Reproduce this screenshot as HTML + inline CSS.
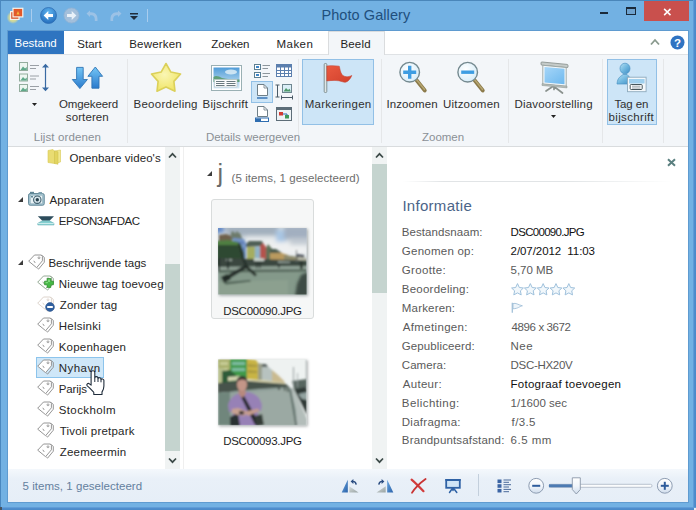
<!DOCTYPE html>
<html lang="nl"><head><meta charset="utf-8"><title>Photo Gallery</title>
<style>
html,body{margin:0;padding:0}
body{width:696px;height:510px;overflow:hidden;position:relative;background:#72b1e3;font-family:"Liberation Sans",sans-serif;}
.a{position:absolute}
.t{position:absolute;white-space:nowrap;line-height:20px;height:20px;font-family:"Liberation Sans",sans-serif;}
svg{position:absolute;overflow:visible}

</style></head><body>
<!-- frame edges -->
<div class="a" style="left:0;top:0;width:696px;height:1px;background:#4a86ba"></div>
<div class="a" style="left:0;top:0;width:1px;height:510px;background:#4a88c0"></div>
<div class="a" style="left:693px;top:0;width:3px;height:510px;background:linear-gradient(90deg,#6aa6dc,#4f8ecf 40%,#4a88c6)"></div>
<div class="a" style="left:0;top:507px;width:696px;height:3px;background:linear-gradient(#6aa6dc,#4f8ecf 40%,#4a88c6)"></div>
<div class="a" style="left:694px;top:508px;width:2px;height:2px;background:#e8eef4"></div>
<div class="a" style="left:0;top:507px;width:2px;height:3px;background:#4a5560"></div>
<div class="a" style="left:7px;top:30px;width:682px;height:473px;background:#5f9bd0"></div>
<!-- window buttons -->
<div class="a" style="left:644px;top:1px;width:45px;height:20px;background:#c9504d"></div>
<svg style="left:662.5px;top:7.5px" width="9" height="8" viewBox="0 0 12 10"><path d="M1.5 0.8 L10 9.2 M10 0.8 L1.5 9.2" stroke="#fff" stroke-width="2" fill="none"/></svg>
<div class="a" style="left:600px;top:12px;width:8px;height:2px;background:#1a2a3a"></div>
<div class="a" style="left:626px;top:7px;width:10px;height:8px;border:1px solid #1a2a3a;border-top-width:2px;box-sizing:border-box;background:#6fa3cf"></div>

<!-- title icons -->
<svg style="left:6px;top:5px" width="20" height="20" viewBox="0 0 20 20">
  <defs><radialGradient id="gw" cx="0.5" cy="0.5" r="0.5"><stop offset="0" stop-color="#f2ea86"/><stop offset="0.6" stop-color="#e6e08a" stop-opacity="0.8"/><stop offset="1" stop-color="#d8dc90" stop-opacity="0"/></radialGradient></defs>
  <circle cx="7" cy="12.500" r="6.500" fill="url(#gw)"/>
  <rect x="4.600" y="6.600" width="8.400" height="7.800" fill="#d8532d" stroke="#f7f3ec" stroke-width="1.200"/>
  <rect x="7" y="3.300" width="9.800" height="8.600" fill="#e2582a" stroke="#f7f3ec" stroke-width="1.200"/>
  <path d="M10.500 9.500 L12 6 L13.500 9.500Z" fill="#f6b53c"/>
</svg>
<div class="a" style="left:31px;top:9px;width:1px;height:13px;background:#a9cdee"></div>
<div class="a" style="left:147px;top:9px;width:1px;height:13px;background:#a9cdee"></div>
<svg style="left:40.300px;top:7.300px" width="17" height="17" viewBox="0 0 17 17">
  <defs><radialGradient id="gb" cx="0.5" cy="0.3" r="0.8"><stop offset="0" stop-color="#5fb4ef"/><stop offset="1" stop-color="#1b62b4"/></radialGradient></defs>
  <circle cx="8.5" cy="8.5" r="8" fill="url(#gb)" stroke="#2f6fb4" stroke-width="0.8"/>
  <path d="M3.6 8.5 L8.3 4 L8.3 6.9 L13 6.9 L13 10.1 L8.3 10.1 L8.3 13Z" fill="#fff"/>
</svg>
<svg style="left:62.800px;top:7.300px" width="17" height="17" viewBox="0 0 17 17">
  <circle cx="8.5" cy="8.5" r="7.600" fill="#a3bfdb" stroke="#8fb2d4" stroke-width="0.8"/>
  <path d="M13.4 8.5 L8.7 4 L8.7 6.9 L4 6.9 L4 10.1 L8.7 10.1 L8.7 13Z" fill="#e9f1f9"/>
</svg>
<svg style="left:86px;top:10px" width="13" height="12" viewBox="0 0 13 12"><path d="M0.5 3.5 L4 0.5 L4 2.3 C9 1.8 12 4.5 11.5 11 L8.8 11 C9.2 7 7.8 5 4 5.2 L4 7Z" fill="#9cc2e6"/></svg>
<svg style="left:109px;top:10px" width="13" height="12" viewBox="0 0 13 12"><path d="M12.5 3.5 L9 0.5 L9 2.3 C4 1.8 1 4.5 1.5 11 L4.2 11 C3.8 7 5.2 5 9 5.2 L9 7Z" fill="#9cc2e6"/></svg>
<svg style="left:130px;top:13px" width="8" height="7" viewBox="0 0 8 7"><rect x="0" y="0" width="8" height="1.5" fill="#1e2d3d"/><path d="M0 3 L8 3 L4 7Z" fill="#1e2d3d"/></svg>

<!-- tab row -->
<div class="a" style="left:8px;top:31px;width:680px;height:23px;background:#fff"></div>
<div class="a" style="left:8px;top:31px;width:56px;height:23px;background:#2e74c0"></div>
<!-- ribbon -->
<div class="a" style="left:8px;top:54px;width:680px;height:93px;background:#f3f6f9;border-top:1px solid #dfe2e5;border-bottom:1px solid #d9dcde;box-sizing:border-box"></div>
<div class="a" style="left:328px;top:31px;width:57px;height:24px;background:#f3f6f9;border:1px solid #dadcde;border-bottom:none;box-sizing:border-box"></div>
<!-- collapse chevron + help -->
<svg style="left:650px;top:38px" width="10" height="8" viewBox="0 0 10 8"><path d="M1 6.5 L5 2 L9 6.5" stroke="#8a9a8e" stroke-width="1.8" fill="none"/></svg>
<svg style="left:670px;top:35px" width="15" height="15" viewBox="0 0 15 15"><circle cx="7.5" cy="7.5" r="7" fill="#2f73c2"/><text x="7.5" y="11.6" font-family="Liberation Sans, sans-serif" font-weight="bold" font-size="11.5" fill="#fff" text-anchor="middle">?</text></svg>

<!-- ribbon separators -->
<div class="a" style="left:127px;top:59px;width:1px;height:84px;background:#e5e7e9"></div>
<div class="a" style="left:298px;top:59px;width:1px;height:84px;background:#e5e7e9"></div>
<div class="a" style="left:381px;top:59px;width:1px;height:84px;background:#e5e7e9"></div>
<div class="a" style="left:508px;top:59px;width:1px;height:84px;background:#e5e7e9"></div>
<div class="a" style="left:602px;top:59px;width:1px;height:84px;background:#e5e7e9"></div>
<div class="a" style="left:663px;top:59px;width:1px;height:84px;background:#e5e7e9"></div>

<!-- ribbon highlighted buttons -->
<div class="a" style="left:302px;top:59px;width:72px;height:66px;background:#cde5f7;border:1px solid #92c0e6;box-sizing:border-box"></div>
<div class="a" style="left:607px;top:59px;width:50px;height:66px;background:#cde5f7;border:1px solid #92c0e6;box-sizing:border-box"></div>
<div class="a" style="left:251px;top:81px;width:22px;height:22px;background:#cde5f7;border:1px solid #92c0e6;box-sizing:border-box"></div>

<!-- RIBBON ICONS -->
<!-- list-order icon -->
<svg style="left:18px;top:62px" width="34" height="32" viewBox="0 0 34 32">
  <g fill="#edf6f1" stroke="#93ad9e" stroke-width="1">
   <rect x="1.5" y="0.5" width="8" height="8"/><rect x="1.5" y="12" width="8" height="7"/><rect x="1.5" y="22.5" width="8" height="7"/>
  </g>
  <g fill="#5fa98a"><path d="M2.5 8 L5 4.5 L7 6.5 L8.8 5 L8.8 8Z"/><path d="M2.5 18.5 L5 15 L7 17 L8.8 15.5 L8.8 18.5Z"/><path d="M2.5 29 L5 25.5 L7 27.5 L8.8 26 L8.8 29Z"/></g>
  <g stroke="#9aa0a6" stroke-width="1"><path d="M12 3.5H21 M12 6.5H18 M12 14H21 M12 17H18 M12 24.5H21 M12 27.5H18"/></g>
  <path d="M27.5 3 V28" stroke="#386aa3" stroke-width="1.2"/>
  <path d="M24 5.5 L27.5 1.700 L31 5.5Z M24 25.500 L27.5 29.300 L31 25.500Z" fill="#386aa3"/>
</svg>
<svg style="left:32px;top:102.5px" width="5" height="3" viewBox="0 0 7 4"><path d="M0 0 L7 0 L3.5 4Z" fill="#222"/></svg>
<!-- reverse sort arrows -->
<svg style="left:71px;top:65px" width="34" height="26" viewBox="0 0 34 26">
  <defs><linearGradient id="ar" x1="0" y1="0" x2="0" y2="1"><stop offset="0" stop-color="#74c6f6"/><stop offset="1" stop-color="#2a7acc"/></linearGradient></defs>
  <path d="M5.6 2.400 H12.200 V14.500 H16.400 L8.900 23.600 L1.300 14.500 H5.6Z" fill="url(#ar)" stroke="#2f75b5" stroke-width="0.9" stroke-linejoin="round"/>
  <path d="M20.900 23.200 H28 V11.300 H31.600 L24.300 2 L16.900 11.300 H20.900Z" fill="url(#ar)" stroke="#2f75b5" stroke-width="0.9" stroke-linejoin="round"/>
</svg>
<!-- star -->
<svg style="left:149px;top:62px" width="34" height="31" viewBox="0 0 34 31">
  <defs><radialGradient id="st" cx="0.45" cy="0.4" r="0.7"><stop offset="0" stop-color="#faf6b4"/><stop offset="1" stop-color="#efe35c"/></radialGradient></defs>
  <path d="M17.00 1.50 L21.88 10.09 L31.55 12.07 L24.89 19.36 L25.99 29.18 L17.00 25.10 L8.01 29.18 L9.11 19.36 L2.45 12.07 L12.12 10.09Z" fill="url(#st)" stroke="#dbd05a" stroke-width="1.6" stroke-linejoin="round"/>
</svg>
<!-- caption icon -->
<svg style="left:211px;top:65px" width="31" height="26" viewBox="0 0 31 26">
  <defs><linearGradient id="sky" x1="0" y1="0" x2="0" y2="1"><stop offset="0" stop-color="#4f9cd8"/><stop offset="1" stop-color="#d6eaf5"/></linearGradient></defs>
  <rect x="0.5" y="0.5" width="30" height="25" fill="#fff" stroke="#9ab0b4"/>
  <rect x="2.5" y="2.5" width="26" height="21" fill="url(#sky)"/>
  <path d="M2.5 12 C5 10 8 11.500 11 13 C16 14.500 22 14 28.5 14.500 V17 H2.5Z" fill="#5fa07a"/><ellipse cx="20" cy="7" rx="6" ry="2.500" fill="#e4f1f8" opacity="0.8"/>
  <rect x="3.500" y="14.500" width="22.500" height="7.500" fill="#fbfcfc" stroke="#b7c3c5" stroke-width="0.6"/>
  <path d="M5 16.500H13.500 M15.500 16.500H24.500 M5 18.500H13.500 M15.500 18.500H24.500 M5 20.500H13.500 M15.500 20.500H24.500" stroke="#596b70" stroke-width="0.9"/>
</svg>
<!-- small icons grid -->
<svg style="left:254px;top:63px" width="40" height="60" viewBox="0 0 40 60">
  <!-- r1c1 -->
  <g fill="#fff" stroke="#5c7f92" stroke-width="1"><rect x="0.5" y="1.5" width="6" height="5"/><rect x="0.5" y="9.5" width="6" height="5"/></g>
  <rect x="2" y="3" width="3" height="2" fill="#3e86c8"/><rect x="2" y="11" width="3" height="2" fill="#3e86c8"/>
  <path d="M8.5 2.5H16 M8.5 5.5H14 M8.5 10.5H16 M8.5 13.5H14" stroke="#8d969c" stroke-width="1"/>
  <!-- r1c2 calendar -->
  <rect x="22.500" y="1.5" width="15" height="12" fill="#fff" stroke="#5b7fae"/>
  <rect x="22" y="1" width="16" height="3.5" fill="#5b7fae"/>
  <path d="M26.500 4V13.500 M30.500 4V13.500 M34.500 4V13.500 M22.500 7.500H37.500 M22.500 10.500H37.500" stroke="#5b7fae" stroke-width="1"/>
  <!-- r2c1 page with lines (selected) -->
  <path d="M3.500 21.500 H10 L13.500 25 V32.500 H3.500Z" fill="#fff" stroke="#6f7f88"/>
  <path d="M10 21.500 V25 H13.500" fill="none" stroke="#6f7f88" stroke-width="0.8"/>
  <path d="M3 35H13.500" stroke="#2e6db0" stroke-width="1.4"/>
  <!-- r2c2 -->
  <path d="M23.500 22 V34 M21.500 22H25.500 M21.500 34H25.500" stroke="#4a5a66" stroke-width="1"/>
  <rect x="28.500" y="21.500" width="9" height="8" fill="#dbeef7" stroke="#6f8791"/>
  <path d="M29.500 28.500 L32 25 L34 27 L35.500 25.800 L36.800 28.500Z" fill="#4f9a6c"/>
  <path d="M27.500 34.500H38.500 M27.500 32.500V36.500 M38.500 32.500V36.500" stroke="#4a5a66" stroke-width="1"/>
  <!-- r3c1 page with bar -->
  <path d="M3.500 43.500 H10 L13.500 47 V53.500 H3.500Z" fill="#fff" stroke="#6f7f88"/>
  <path d="M10 43.500 V47 H13.500" fill="none" stroke="#6f7f88" stroke-width="0.8"/>
  <rect x="1.5" y="55" width="13" height="3.5" fill="#fff" stroke="#2e6db0"/><rect x="2" y="55.500" width="5" height="2.500" fill="#2e6db0"/>
  <!-- r3c2 window -->
  <rect x="22.500" y="44.500" width="15" height="13" fill="#eef3f6" stroke="#5d6d78"/>
  <rect x="22" y="44" width="16" height="3" fill="#5d6d78"/>
  <rect x="25" y="49" width="4" height="3.500" fill="#d23b33"/><rect x="31" y="52" width="4" height="3.500" fill="#3f9a59"/>
  <path d="M29 51H33V52" stroke="#2e6db0" fill="none" stroke-width="1"/>
</svg>
<!-- flag -->
<svg style="left:322px;top:62px" width="32" height="32" viewBox="0 0 32 32">
  <defs><linearGradient id="fl" x1="0" y1="0" x2="1" y2="1"><stop offset="0" stop-color="#ea5a40"/><stop offset="1" stop-color="#d0402c"/></linearGradient></defs>
  <rect x="2.200" y="1.5" width="2.600" height="29" rx="1" fill="#dfe6e6" stroke="#6f7d7d" stroke-width="0.8"/>
  <path d="M4.800 4 C9 3.400 13 3.600 17.300 4.200 C18 7 18.500 10.500 20 12.500 C22 15 26 15.500 29.800 13.400 C28 18 24.500 21.500 20.500 19.800 C16 18 10 18.200 4.800 19Z" fill="url(#fl)" stroke="#c2402f" stroke-width="0.5"/>
</svg>
<!-- zoom in -->
<svg style="left:396px;top:59px" width="34" height="36" viewBox="0 0 34 36">
  <defs><radialGradient id="gl" cx="0.4" cy="0.35" r="0.8"><stop offset="0" stop-color="#ffffff"/><stop offset="1" stop-color="#cfeaf8"/></radialGradient></defs>
  <path d="M20 20.500 L28.800 31.500" stroke="#8b7a4a" stroke-width="3.800" stroke-linecap="round"/>
  <path d="M20.500 20.500 L28.500 30.500" stroke="#b7a772" stroke-width="1.400" stroke-linecap="round"/>
  <circle cx="13.700" cy="13.200" r="9.800" fill="url(#gl)" stroke="#74898f" stroke-width="1.400"/>
  <path d="M13.700 6.700V19.700 M7.200 13.200H20.200" stroke="#3d9de2" stroke-width="3.400"/>
</svg>
<!-- zoom out -->
<svg style="left:454px;top:59px" width="34" height="36" viewBox="0 0 34 36">
  <path d="M20 20.500 L28.800 31.500" stroke="#8b7a4a" stroke-width="3.800" stroke-linecap="round"/>
  <path d="M20.500 20.500 L28.500 30.500" stroke="#b7a772" stroke-width="1.400" stroke-linecap="round"/>
  <circle cx="13.700" cy="13.200" r="9.800" fill="url(#gl)" stroke="#74898f" stroke-width="1.400"/>
  <path d="M7.200 13.200H20.200" stroke="#3d9de2" stroke-width="3.400"/>
</svg>
<!-- slideshow -->
<svg style="left:540px;top:61px" width="29" height="33" viewBox="0 0 29 33">
  <defs><linearGradient id="sc" x1="0" y1="0" x2="1" y2="1"><stop offset="0" stop-color="#a6d6f8"/><stop offset="1" stop-color="#6db8ee"/></linearGradient></defs>
  <path d="M13.500 25 L6 30 M14 25.500 L22.500 32 M14 24 V28.500" stroke="#8a928e" stroke-width="1.700" stroke-linecap="round"/>
  <g transform="skewY(5.5)">
  <rect x="1" y="0.800" width="27" height="3.200" rx="1" fill="#c5cbc9" stroke="#858d89" stroke-width="0.8"/>
  <rect x="2.800" y="4" width="23.400" height="19" fill="#f4f8fa" stroke="#9aa5a2" stroke-width="0.9"/>
  <rect x="4.500" y="5.500" width="20" height="15.500" fill="url(#sc)"/>
  <rect x="2" y="22.500" width="25" height="1.800" fill="#b7bfbc" stroke="#8a928e" stroke-width="0.5"/>
  </g>
</svg>
<svg style="left:551px;top:114.5px" width="5" height="3" viewBox="0 0 7 4"><path d="M0 0 L7 0 L3.5 4Z" fill="#222"/></svg>
<!-- tag & caption icon -->
<svg style="left:616px;top:62px" width="31" height="31" viewBox="0 0 31 31">
  <defs><linearGradient id="pe" x1="0" y1="0" x2="1" y2="1"><stop offset="0" stop-color="#b5e0f3"/><stop offset="0.5" stop-color="#6fb7df"/><stop offset="1" stop-color="#3f8dc4"/></linearGradient></defs>
  <path d="M1 22 C1.500 15 5 14.500 7 12.500 L11 12.500 C12.500 14.500 15.500 15 16 22Z" fill="url(#pe)" stroke="#4a94c4" stroke-width="0.7"/>
  <ellipse cx="9" cy="6.500" rx="5" ry="5.300" fill="url(#pe)" stroke="#4a94c4" stroke-width="0.7"/>
  <rect x="11.500" y="15.200" width="18.600" height="14.500" fill="#f3f8fb" stroke="#8eaabd" stroke-width="0.9"/>
  <rect x="13" y="17" width="15.600" height="4.500" fill="#9fd0ee"/>
  <rect x="14.200" y="22.500" width="12" height="5" rx="1" fill="#fff" stroke="#46565a" stroke-width="1"/>
  <path d="M16 24.200H24.500 M16 26H24.500" stroke="#6d7c84" stroke-width="0.7"/>
</svg>

<!-- content -->
<div class="a" style="left:8px;top:147px;width:680px;height:322px;background:#fff"></div>
<!-- left scrollbar -->
<div class="a" style="left:165px;top:147px;width:15px;height:322px;background:#f0f3f3"></div>
<div class="a" style="left:165px;top:264px;width:15px;height:187px;background:#c5d4cf"></div>
<svg style="left:168px;top:152px" width="9" height="7" viewBox="0 0 9 7"><path d="M1 5.500 L4.500 1.800 L8 5.500" stroke="#3d4a48" stroke-width="1.700" fill="none"/></svg>
<svg style="left:168px;top:457px" width="9" height="7" viewBox="0 0 9 7"><path d="M1 1.500 L4.500 5.200 L8 1.500" stroke="#3d4a48" stroke-width="1.700" fill="none"/></svg>
<div class="a" style="left:183px;top:147px;width:1px;height:322px;background:#efefef"></div>
<!-- center scrollbar -->
<div class="a" style="left:372px;top:147px;width:15px;height:322px;background:#f0f3f3"></div>
<div class="a" style="left:372px;top:164px;width:15px;height:128.5px;background:#c5d4cf"></div>
<svg style="left:375px;top:152px" width="9" height="7" viewBox="0 0 9 7"><path d="M1 5.500 L4.500 1.800 L8 5.500" stroke="#3d4a48" stroke-width="1.700" fill="none"/></svg>
<svg style="left:375px;top:457px" width="9" height="7" viewBox="0 0 9 7"><path d="M1 1.500 L4.500 5.200 L8 1.500" stroke="#3d4a48" stroke-width="1.700" fill="none"/></svg>


<!-- tree selection -->
<div class="a" style="left:36px;top:357px;width:68px;height:21px;background:#cfe7f8;border:1px solid #8cc4ec;box-sizing:border-box"></div>

<!-- thumbnail selection -->
<div class="a" style="left:211px;top:199px;width:103px;height:120px;background:#f6f7f7;border:1px solid #d9dcdc;border-radius:3px;box-sizing:border-box"></div>

<!-- info separator line -->
<div class="a" style="left:403px;top:181px;width:270px;height:1px;background:linear-gradient(90deg,rgba(225,228,230,0),#e1e4e6 15%,#e1e4e6 60%,rgba(225,228,230,0))"></div>
<svg style="left:667px;top:158px" width="9" height="9" viewBox="0 0 9 9"><path d="M1 1.300 L8 7.700 M8 1.300 L1 7.700" stroke="#5a7f7f" stroke-width="2"/></svg>

<!-- status -->
<div class="a" style="left:8px;top:469px;width:680px;height:33px;background:linear-gradient(#f4f8fc,#e9f0f8 30%,#e6eef7)"></div>
<svg style="left:47px;top:149px" width="15" height="16" viewBox="0 0 15 16">
<path d="M1 1.500 L6 0.500 L7.500 2 V14.500 L1 13.500Z" fill="#e9dc72" stroke="#d8c955" stroke-width="0.6"/>
<path d="M7.500 2 L13.500 1 V13 L7.500 14.500Z" fill="#f1e88f" stroke="#d8c955" stroke-width="0.6"/>
<path d="M7.500 2 L11 2.800 V15.300 L7.500 14.500Z" fill="#e2d460" stroke="#cfc04d" stroke-width="0.5"/>
</svg>
<svg style="left:28px;top:191px" width="17" height="15" viewBox="0 0 17 15">
<rect x="0.600" y="2.600" width="15.600" height="11.600" rx="1.500" fill="#a9c9d6" stroke="#5f8595" stroke-width="1"/>
<rect x="2" y="0.800" width="4" height="2" fill="#5f8595"/><rect x="10.500" y="1" width="3.500" height="1.800" fill="#7fa2b0"/>
<rect x="2.200" y="4.200" width="12.400" height="8.600" fill="#e8f2f6" stroke="#88a9b6" stroke-width="0.6"/>
<circle cx="9.300" cy="8.700" r="3.700" fill="#d7e6ec" stroke="#3f5e6c" stroke-width="1.100"/>
<circle cx="9.300" cy="8.700" r="1.700" fill="#27414d"/>
<rect x="3" y="5" width="2" height="1.500" fill="#5f8595"/>
</svg>
<svg style="left:37px;top:215px" width="18" height="11" viewBox="0 0 18 11">
<path d="M0.800 1.200 H17 L12.500 5.800 H5.300Z" fill="#2d4c5c"/>
<path d="M5.300 5.800 H12.500 L17 8.300 V10 H0.800 V8.300Z" fill="#86cfd0" stroke="#5aa6ad" stroke-width="0.5"/>
<path d="M1 8.600 H16.800" stroke="#e4f6f6" stroke-width="0.8"/>
</svg>
<svg style="left:18px;top:197px" width="5" height="5" viewBox="0 0 5 5"><path d="M5 0 V5 H0Z" fill="#3c3c3c"/></svg>
<svg style="left:18px;top:260px" width="5" height="5" viewBox="0 0 5 5"><path d="M5 0 V5 H0Z" fill="#3c3c3c"/></svg>
<svg style="left:27.5px;top:253.5px;opacity:1" width="18" height="17" viewBox="0 0 18 17">
<path d="M13.700 1.200 L16.300 3.400 V8.200 L10.600 15.100 L9.300 14.100" fill="none" stroke="#8a8a8a" stroke-width="0.9"/>
<path d="M0.700 7.200 L6.500 1 H13.100 L14.400 2.400 V6.800 L8.600 13.700Z" fill="#fff" stroke="#8a8a8a" stroke-width="0.9" stroke-linejoin="round"/>
<circle cx="11" cy="3.800" r="0.950" fill="none" stroke="#8a8a8a" stroke-width="0.8"/>
<path d="M5.800 6.800 L7.200 8.900" stroke="#8a8a8a" stroke-width="0.9"/></svg>
<svg style="left:37.3px;top:274.5px;opacity:1" width="18" height="17" viewBox="0 0 18 17">
<path d="M13.700 1.200 L16.300 3.400 V8.200 L10.600 15.100 L9.300 14.100" fill="none" stroke="#8aa08a" stroke-width="0.9"/>
<path d="M0.700 7.200 L6.500 1 H13.100 L14.400 2.400 V6.800 L8.600 13.700Z" fill="#fff" stroke="#8aa08a" stroke-width="0.9" stroke-linejoin="round"/>
<circle cx="11" cy="3.800" r="0.950" fill="none" stroke="#8aa08a" stroke-width="0.8"/>
<path d="M5.800 6.800 L7.200 8.900" stroke="#8aa08a" stroke-width="0.9"/></svg>
<svg style="left:44px;top:278px" width="10" height="10" viewBox="0 0 10 10">
<path d="M3.200 0.600 H6.800 V3.200 H9.400 V6.800 H6.800 V9.400 H3.200 V6.800 H0.600 V3.200 H3.200Z" fill="#45b945" stroke="#2f8f2f" stroke-width="0.8" stroke-linejoin="round"/>
<path d="M3.900 1.500 H6 V3.900 H3.900Z M1.500 3.900 H3.900 V5.200 H1.500Z" fill="#8fe08a" opacity="0.8"/>
</svg>
<svg style="left:37.3px;top:295.5px;opacity:1" width="18" height="17" viewBox="0 0 18 17">
<path d="M13.700 1.200 L16.300 3.400 V8.200 L10.600 15.100 L9.300 14.100" fill="none" stroke="#d9cfc6" stroke-width="0.9"/>
<path d="M0.700 7.200 L6.500 1 H13.100 L14.400 2.400 V6.800 L8.600 13.700Z" fill="#fff" stroke="#d9cfc6" stroke-width="0.9" stroke-linejoin="round"/>
<circle cx="11" cy="3.800" r="0.950" fill="none" stroke="#d9cfc6" stroke-width="0.8"/>
<path d="M5.800 6.800 L7.200 8.900" stroke="#d9cfc6" stroke-width="0.9"/></svg>
<svg style="left:44.500px;top:302px" width="10" height="10" viewBox="0 0 10 10">
<circle cx="5" cy="5" r="4.400" fill="#2f5f9f" stroke="#274f86" stroke-width="0.6"/><rect x="2.200" y="4" width="5.600" height="2" fill="#fff"/></svg>
<svg style="left:37.3px;top:316.5px;opacity:1" width="18" height="17" viewBox="0 0 18 17">
<path d="M13.700 1.200 L16.300 3.400 V8.200 L10.600 15.100 L9.300 14.100" fill="none" stroke="#8a8a8a" stroke-width="0.9"/>
<path d="M0.700 7.200 L6.500 1 H13.100 L14.400 2.400 V6.800 L8.600 13.700Z" fill="#fff" stroke="#8a8a8a" stroke-width="0.9" stroke-linejoin="round"/>
<circle cx="11" cy="3.800" r="0.950" fill="none" stroke="#8a8a8a" stroke-width="0.8"/>
<path d="M5.800 6.800 L7.200 8.900" stroke="#8a8a8a" stroke-width="0.9"/></svg>
<svg style="left:37.3px;top:337.5px;opacity:1" width="18" height="17" viewBox="0 0 18 17">
<path d="M13.700 1.200 L16.300 3.400 V8.200 L10.600 15.100 L9.300 14.100" fill="none" stroke="#8a8a8a" stroke-width="0.9"/>
<path d="M0.700 7.200 L6.500 1 H13.100 L14.400 2.400 V6.800 L8.600 13.700Z" fill="#fff" stroke="#8a8a8a" stroke-width="0.9" stroke-linejoin="round"/>
<circle cx="11" cy="3.800" r="0.950" fill="none" stroke="#8a8a8a" stroke-width="0.8"/>
<path d="M5.800 6.800 L7.200 8.900" stroke="#8a8a8a" stroke-width="0.9"/></svg>
<svg style="left:37.3px;top:358.5px;opacity:1" width="18" height="17" viewBox="0 0 18 17">
<path d="M13.700 1.200 L16.300 3.400 V8.200 L10.600 15.100 L9.300 14.100" fill="none" stroke="#8a8a8a" stroke-width="0.9"/>
<path d="M0.700 7.200 L6.500 1 H13.100 L14.400 2.400 V6.800 L8.600 13.700Z" fill="#fff" stroke="#8a8a8a" stroke-width="0.9" stroke-linejoin="round"/>
<circle cx="11" cy="3.800" r="0.950" fill="none" stroke="#8a8a8a" stroke-width="0.8"/>
<path d="M5.800 6.800 L7.200 8.900" stroke="#8a8a8a" stroke-width="0.9"/></svg>
<svg style="left:37.3px;top:379.5px;opacity:1" width="18" height="17" viewBox="0 0 18 17">
<path d="M13.700 1.200 L16.300 3.400 V8.200 L10.600 15.100 L9.300 14.100" fill="none" stroke="#8a8a8a" stroke-width="0.9"/>
<path d="M0.700 7.200 L6.500 1 H13.100 L14.400 2.400 V6.800 L8.600 13.700Z" fill="#fff" stroke="#8a8a8a" stroke-width="0.9" stroke-linejoin="round"/>
<circle cx="11" cy="3.800" r="0.950" fill="none" stroke="#8a8a8a" stroke-width="0.8"/>
<path d="M5.800 6.800 L7.200 8.900" stroke="#8a8a8a" stroke-width="0.9"/></svg>
<svg style="left:37.3px;top:400.5px;opacity:1" width="18" height="17" viewBox="0 0 18 17">
<path d="M13.700 1.200 L16.300 3.400 V8.200 L10.600 15.100 L9.300 14.100" fill="none" stroke="#8a8a8a" stroke-width="0.9"/>
<path d="M0.700 7.200 L6.500 1 H13.100 L14.400 2.400 V6.800 L8.600 13.700Z" fill="#fff" stroke="#8a8a8a" stroke-width="0.9" stroke-linejoin="round"/>
<circle cx="11" cy="3.800" r="0.950" fill="none" stroke="#8a8a8a" stroke-width="0.8"/>
<path d="M5.800 6.800 L7.200 8.900" stroke="#8a8a8a" stroke-width="0.9"/></svg>
<svg style="left:37.3px;top:421.5px;opacity:1" width="18" height="17" viewBox="0 0 18 17">
<path d="M13.700 1.200 L16.300 3.400 V8.200 L10.600 15.100 L9.300 14.100" fill="none" stroke="#8a8a8a" stroke-width="0.9"/>
<path d="M0.700 7.200 L6.500 1 H13.100 L14.400 2.400 V6.800 L8.600 13.700Z" fill="#fff" stroke="#8a8a8a" stroke-width="0.9" stroke-linejoin="round"/>
<circle cx="11" cy="3.800" r="0.950" fill="none" stroke="#8a8a8a" stroke-width="0.8"/>
<path d="M5.800 6.800 L7.200 8.900" stroke="#8a8a8a" stroke-width="0.9"/></svg>
<svg style="left:37.3px;top:442.5px;opacity:1" width="18" height="17" viewBox="0 0 18 17">
<path d="M13.700 1.200 L16.300 3.400 V8.200 L10.600 15.100 L9.300 14.100" fill="none" stroke="#8a8a8a" stroke-width="0.9"/>
<path d="M0.700 7.200 L6.500 1 H13.100 L14.400 2.400 V6.800 L8.600 13.700Z" fill="#fff" stroke="#8a8a8a" stroke-width="0.9" stroke-linejoin="round"/>
<circle cx="11" cy="3.800" r="0.950" fill="none" stroke="#8a8a8a" stroke-width="0.8"/>
<path d="M5.800 6.800 L7.200 8.900" stroke="#8a8a8a" stroke-width="0.9"/></svg>
<svg style="left:86px;top:370px" width="20" height="26" viewBox="0 0 20 26">
<path d="M5.100 15.200 V2.600 C5.100 0.200 8.800 0.200 8.800 2.600 V7.800 C9 6.200 11.800 6.300 12 8 V8.600 C12.300 7.200 14.900 7.400 15 9 V9.600 C15.400 8.500 17.800 8.700 17.900 10.400 V16 C17.900 19 16.800 20.500 16 22 V24.500 H7.800 V22.500 C6 20.500 3.500 17.500 1 15.600 C0.200 14 2.200 12.800 3.400 13.800Z" fill="#fff" stroke="#1e2b3a" stroke-width="1.100" stroke-linejoin="round"/>
<path d="M8.800 7.800 V12 M12 8.600 V12 M15 9.600 V12.300" stroke="#1e2b3a" stroke-width="1"/>
</svg>
<svg style="left:207px;top:170.5px" width="5" height="5" viewBox="0 0 5 5"><path d="M5 0 V5 H0Z" fill="#3c3c3c"/></svg>
<svg style="left:510.500px;top:283px" width="66" height="13" viewBox="0 0 66 13"><path transform="translate(0.00,0)" d="M6.500 0.600 L8.300 4.500 L12.400 5 L9.400 7.800 L10.200 11.900 L6.500 9.900 L2.800 11.900 L3.600 7.800 L0.600 5 L4.700 4.500Z" fill="#f1f7fb" stroke="#9fc1dc" stroke-width="1" stroke-linejoin="round"/><path transform="translate(12.83,0)" d="M6.500 0.600 L8.300 4.500 L12.400 5 L9.400 7.800 L10.200 11.900 L6.500 9.900 L2.800 11.900 L3.600 7.800 L0.600 5 L4.700 4.500Z" fill="#f1f7fb" stroke="#9fc1dc" stroke-width="1" stroke-linejoin="round"/><path transform="translate(25.66,0)" d="M6.500 0.600 L8.300 4.500 L12.400 5 L9.400 7.800 L10.200 11.900 L6.500 9.900 L2.800 11.900 L3.600 7.800 L0.600 5 L4.700 4.500Z" fill="#f1f7fb" stroke="#9fc1dc" stroke-width="1" stroke-linejoin="round"/><path transform="translate(38.49,0)" d="M6.500 0.600 L8.300 4.500 L12.400 5 L9.400 7.800 L10.200 11.900 L6.500 9.900 L2.800 11.900 L3.600 7.800 L0.600 5 L4.700 4.500Z" fill="#f1f7fb" stroke="#9fc1dc" stroke-width="1" stroke-linejoin="round"/><path transform="translate(51.32,0)" d="M6.500 0.600 L8.300 4.500 L12.400 5 L9.400 7.800 L10.200 11.900 L6.500 9.900 L2.800 11.900 L3.600 7.800 L0.600 5 L4.700 4.500Z" fill="#f1f7fb" stroke="#9fc1dc" stroke-width="1" stroke-linejoin="round"/></svg>
<svg style="left:511px;top:302px" width="13" height="12" viewBox="0 0 13 12">
<path d="M1.300 0.800 V10.800" stroke="#a3c1d9" stroke-width="1.300"/>
<path d="M2 1.600 C5 0.600 6.500 2.600 11.400 3.800 C8 4.600 7.500 6.500 2 6.800Z" fill="#eef5fa" stroke="#a3c1d9" stroke-width="0.9"/></svg>
<svg style="left:218px;top:228px;filter:drop-shadow(1px 1px 1.500px rgba(60,70,70,.45))" width="89" height="67" viewBox="0 0 89 67">
<defs><filter id="b1" x="-5%" y="-5%" width="110%" height="110%"><feGaussianBlur stdDeviation="0.850"/></filter>
<filter id="b2" x="-10%" y="-10%" width="120%" height="120%"><feGaussianBlur stdDeviation="2"/></filter>
<filter id="b3" x="-20%" y="-20%" width="140%" height="140%"><feGaussianBlur stdDeviation="1.500"/></filter>
<clipPath id="c1"><rect x="0" y="0" width="88.600" height="66.500"/></clipPath></defs>
<g clip-path="url(#c1)">
<rect width="89" height="67" fill="#d3dbe0"/>
<g filter="url(#b2)">
<rect x="-3" y="-3" width="9" height="8" fill="#5f86c4"/>
<rect x="8" y="-3" width="52" height="11" fill="#a3b0be"/>
<rect x="58" y="2" width="10" height="14" fill="#a9c6e4"/>
<rect x="66" y="-2" width="26" height="13" fill="#a2afc0"/>
<rect x="28" y="8" width="30" height="8" fill="#e6eaec"/>
<rect x="44" y="14" width="46" height="14" fill="#eef0f1"/>
<rect x="72" y="10" width="20" height="7" fill="#c3cbd3"/>
</g>
<g filter="url(#b1)">
<path d="M1 7 L8 6 L14 8 L14 14 L1 14Z" fill="#6e604c"/>
<path d="M13 5 L14 3.500 L16 3.500 L16 5 L18 5 L18 3.500 L20 3.500 L20 5 L22 5 L24 10 L26 12 L13 12Z" fill="#6d7a6c"/>
<path d="M15 10 L26 11 L28 15 L28 30 L15 30Z" fill="#7494c8"/>
<path d="M16 13 L26 14 L26 16 L16 15Z M16 19 L27 20 L27 22 L16 21Z" fill="#5d7bb0"/>
<path d="M28 16 L31 13 L44 13 L46 18 L28 19Z" fill="#4f5e55"/>
<path d="M29 19 L37 19 L37 32 L29 32Z" fill="#a5ad60"/>
<path d="M37 19 L42 19 L42 32 L37 32Z" fill="#8fb3c6"/>
<path d="M42 18 L45 15 L48 19 L48 31 L42 31Z" fill="#b4534e"/>
<path d="M48 20 L50 16 L55 22 L58 26 L58 33 L48 33Z" fill="#5e7158"/>
<path d="M52 24 L60 24 L70 27 L70 33 L52 33Z" fill="#b99a5e"/>
<path d="M52 21 L58 21 L64 25 L52 25Z" fill="#4c5c4e"/>
<path d="M66 27 L80 29 L80 34 L66 34Z" fill="#8d8a6c"/>
<path d="M78 26 L86 27 L86 30 L78 29Z" fill="#4a4f58"/>
<path d="M80 29 L89 30 L89 35 L80 35Z" fill="#b9baa8"/>
<path d="M-1 13 L10 12 L20 14 L24 18 L24 20 L-1 20Z" fill="#4f7f42"/>
<path d="M-1 17 L22 17 L26 24 L27 36 L-1 38Z" fill="#2f4a30"/>
<path d="M0 30 L89 32.500 L89 39 L0 40Z" fill="#3a4640"/>
<path d="M36 30 L46 30.500 L46 33 L36 33Z" fill="#c9d3cc"/>
<path d="M8 31 L14 31 L14 33 L8 33Z M60 33 L72 33.500 L72 35 L60 35Z" fill="#8d9a92"/>
<path d="M0 39 L89 38 L89 68 L0 68Z" fill="#84998a"/>
<path d="M0 39 L89 38 L89 41 L0 42.500Z" fill="#8fa095"/>
<path d="M0 42 L89 41.500 L89 43.500 L0 44.500Z" fill="#4f6055"/>
<path d="M0 54 L70 52 L70 68 L0 68Z" fill="#8ca08f"/>
<path d="M20 15 L22 15 L26 30 L30 38 L39 46.500 L37 48.500 L27.500 40 L24 31Z" fill="#28322c"/>
<path d="M27 37 L30 39.500 L10 51.500 L7 48.500Z" fill="#252f29"/>
<path d="M3 49 L9 46 L13 51 L6 55Z" fill="#222b26"/>
<path d="M5 54.500 L32 52 L33 53.500 L8 56.500Z" fill="#4a5c50"/>
<rect x="0" y="30" width="2" height="12" fill="#27302b"/>
<rect x="9" y="31" width="2" height="10" fill="#27302b"/>
<rect x="38" y="34" width="1.500" height="6" fill="#2c3630"/><rect x="41" y="34" width="1.500" height="6" fill="#2c3630"/>
<rect x="60" y="35" width="1.500" height="5" fill="#2c3630"/><rect x="82" y="33" width="2.500" height="8" fill="#27302b"/>
<rect x="78" y="22" width="0.800" height="12" fill="#6a6f72"/>
</g>
<path d="M90 44 L83 47 L79 56 L77 68 L90 68Z" fill="#3c4b44" filter="url(#b3)"/>
</g></svg>
<svg style="left:218px;top:359px;filter:drop-shadow(1px 1px 1.500px rgba(60,70,70,.45))" width="89" height="67" viewBox="0 0 89 67">
<defs><clipPath id="c2"><rect x="0" y="0.300" width="88.600" height="66"/></clipPath></defs>
<g clip-path="url(#c2)">
<rect width="89" height="67" fill="#eef2f1"/>
<g filter="url(#b1)">
<path d="M0 0 L12 0 L12 14 L0 16Z" fill="#a8af6c"/>
<path d="M2 3 L10 3 L10 6 L2 6Z M2 9 L10 9 L10 12 L2 12Z" fill="#cfd4a2" opacity="0.8"/>
<path d="M12 0 L29 0 L29 19 L12 17Z" fill="#3f9a49"/>
<path d="M14 3 L27 3 L27 6 L14 6Z M14 9 L27 9 L27 12 L14 12Z" fill="#8ec4b8" opacity="0.8"/>
<path d="M29 0 L38 1 L40 4 L40 21 L29 20Z" fill="#c8b445"/>
<path d="M30 5 L39 6 L39 8 L30 8Z M30 11 L39 12 L39 14 L30 14Z" fill="#a3943f" opacity="0.8"/>
<path d="M40 4 L44 5 L46 7 L46 22 L40 21Z" fill="#9a9f8a"/>
<path d="M44 5 L46 4.500 L48 6 L54 11 L54 23 L44 22Z" fill="#b7c2bf"/>
<path d="M44 5 L48 5 L50 8 L44 8Z" fill="#555f5c"/>
<path d="M54 11 L60 16 L66 22 L67 24 L54 23Z" fill="#c9ba8f"/>
<path d="M0 9 L6 9 L7 26 L0 27Z" fill="#b7bf8c"/>
<path d="M4 12 L12 11 L18 16 L19 24 L4 25Z" fill="#2f5b39"/>
<path d="M10 18 L22 17 L24 21 L10 22Z" fill="#d5d6b0"/>
<path d="M30 21 L46 21 L67 24 L67 26 L30 25Z" fill="#d7d3ac"/>
<path d="M0 24 L30 22 L68 25 L72 29 L0 34Z" fill="#46534b"/>
<path d="M0 34 L40 30 L72 28 L76 32 L89 67 L0 67Z" fill="#93a39d"/>
<path d="M30 34 L70 30 L78 66 L40 67Z" fill="#9ba9a3"/>
<path d="M0 34 L12 33 L12 66 L0 66Z" fill="#70867b"/>
<path d="M60 26 L62 26 L62 31 L60 31Z M66 27 L67.500 27 L67.500 32 L66 32Z M69 27 L70.500 27 L70.500 33 L69 33Z" fill="#49544e"/>
<path d="M72 29 L76 29 L89 60 L89 67 L79 67 L78 50Z" fill="#b3bdba"/>
<path d="M71.500 30 L73 30 L79 67 L77.500 67Z" fill="#4a5a55"/>
<path d="M74 22 L89 20 L89 29 L76 30Z" fill="#56655f"/>
<path d="M76 30 L89 28 L89 56 L84 46Z" fill="#2d3836"/>
<path d="M80 35 L89 33 L89 41 L84 40Z" fill="#93a3a0"/>
<rect x="75" y="8" width="0.900" height="20" fill="#8c9696"/><rect x="79" y="14" width="0.800" height="14" fill="#9aa4a4"/><rect x="88" y="1" width="0.800" height="30" fill="#7f8a8a"/>
<!-- person -->
<path d="M10 46 C12 38 18 35 23 33.500 L30 33 C36 34 42 37 44 46 L43 52 L40 52 L40 67 L14 67 L15 52 L11 53Z" fill="#9781b6"/>
<path d="M21 34 L24 33 L41 64 L37 66Z" fill="#25272b"/>
<path d="M12 58 L20 54 L22 67 L12 67Z" fill="#2c3230"/>
<path d="M37 57 L44 55 L46 66 L38 67Z" fill="#363e39"/>
<path d="M14 50 L20 49 L28 52 L27 57 L20 56 L14 54Z" fill="#c9a291"/>
<path d="M26 53 L40 49.500 L41.500 52 L30 57Z" fill="#c59c8c"/>
<path d="M21 52 L26 52 L26 55.500 L21 55.500Z" fill="#3a3436"/>
<ellipse cx="24" cy="25.500" rx="5" ry="7.200" fill="#c39688"/>
<path d="M18.500 24 C17.500 15 30 14.500 29.500 23 C27 19.500 21 19.500 18.500 24Z" fill="#38302e"/>
<path d="M20.500 31.500 L27.500 31.500 L28 35 L24 39 L20.500 35Z" fill="#b8897e"/>
</g></g></svg>
<svg style="left:341px;top:478px" width="19" height="16" viewBox="0 0 19 16">
<defs><linearGradient id="bt" x1="0" y1="0" x2="1" y2="1"><stop offset="0" stop-color="#6aa6df"/><stop offset="1" stop-color="#2a62aa"/></linearGradient>
<linearGradient id="gt" x1="0" y1="0" x2="1" y2="1"><stop offset="0" stop-color="#d6dcdc"/><stop offset="1" stop-color="#98a3a3"/></linearGradient></defs>
<path d="M0.700 14.400 H6.800 V1.800Z" fill="url(#bt)"/>
<path d="M8.300 8.300 V14.400 H17.500Z" fill="url(#gt)"/>
<path d="M15.200 6.600 C15 4.600 13.800 3.400 11.800 3.400" fill="none" stroke="#2b4c80" stroke-width="1.400"/>
<path d="M12.400 0.900 L9.600 3.400 L12.400 5.900Z" fill="#2b4c80"/>
</svg>
<svg style="left:374.500px;top:478px" width="19" height="16" viewBox="0 0 19 16">
<path d="M18.300 14.400 H12.200 V1.800Z" fill="url(#bt)"/>
<path d="M10.700 8.300 V14.400 H1.500Z" fill="url(#gt)"/>
<path d="M3.800 6.600 C4 4.600 5.200 3.400 7.200 3.400" fill="none" stroke="#2b4c80" stroke-width="1.400"/>
<path d="M6.600 0.900 L9.400 3.400 L6.600 5.900Z" fill="#2b4c80"/>
</svg>
<svg style="left:410px;top:478px" width="17" height="16" viewBox="0 0 17 16">
<path d="M1.600 1.600 C5 4.500 9 8.500 13.500 13.200" stroke="#d23c3c" stroke-width="2.200" stroke-linecap="round" fill="none"/>
<path d="M15.600 1 C10 5 5 10 2 14.800" stroke="#c93434" stroke-width="1.800" stroke-linecap="round" fill="none"/>
</svg>
<svg style="left:445px;top:478px" width="17" height="16" viewBox="0 0 17 16">
<path d="M8 9.500 L4.500 14.500 M8 9.500 L11.800 14.500 M8 9.500 V12.500" stroke="#2f62a5" stroke-width="1.500" stroke-linecap="round"/>
<rect x="1.200" y="2" width="13.600" height="7.800" fill="#cfe4f6" stroke="#2f62a5" stroke-width="1.800"/>
<rect x="0.300" y="1" width="15.400" height="1.800" fill="#2f62a5"/>
</svg>
<div class="a" style="left:478px;top:474px;width:1px;height:22px;background:#c3cfdc"></div>
<svg style="left:496.500px;top:479px" width="15" height="14" viewBox="0 0 15 14">
<g fill="#3b64a4"><rect x="0.500" y="0.500" width="4" height="3.600"/><rect x="0.500" y="5.200" width="4" height="3.600"/><rect x="0.500" y="9.900" width="4" height="3.600"/></g>
<path d="M6.500 1H14 M6.500 3.300H12 M6.500 5.700H14 M6.500 8H12 M6.500 10.400H14 M6.500 12.700H12" stroke="#4a6a9a" stroke-width="1"/>
</svg>
<svg style="left:528px;top:477px" width="146" height="19" viewBox="0 0 146 19">
<defs><linearGradient id="cb" x1="0" y1="0" x2="0" y2="1"><stop offset="0" stop-color="#ffffff"/><stop offset="0.500" stop-color="#f2f6fb"/><stop offset="1" stop-color="#cfdcec"/></linearGradient></defs>
<circle cx="8.200" cy="8.800" r="7.400" fill="url(#cb)" stroke="#8e9db2" stroke-width="1"/>
<rect x="4.200" y="7.800" width="8" height="2" fill="#2f5c9c"/>
<rect x="21" y="7.300" width="103" height="3" rx="1.500" fill="#fbfcfd" stroke="#a9b5c4" stroke-width="0.8"/>
<rect x="21" y="7.300" width="24" height="3" fill="#4c7ab2"/>
<path d="M44.300 0.800 H52.300 V12.500 L48.300 17 L44.300 12.500Z" fill="url(#cb)" stroke="#8a97a8" stroke-width="0.9"/>
<circle cx="136.800" cy="8.800" r="7.400" fill="url(#cb)" stroke="#8e9db2" stroke-width="1"/>
<rect x="132.800" y="7.800" width="8" height="2" fill="#2f5c9c"/><rect x="135.800" y="4.800" width="2" height="8" fill="#2f5c9c"/>
</svg>
<div class="t" id="t0" style="left:321.40px;top:5.40px;font-size:14.5px;color:#1f4f7d;letter-spacing:0.083px;">Photo Gallery</div>
<div class="t" id="t1" style="left:14.50px;top:33.20px;font-size:11.5px;color:#ffffff;letter-spacing:0.000px;">Bestand</div>
<div class="t" id="t2" style="left:77.30px;top:34.20px;font-size:11.5px;color:#1e1e1e;letter-spacing:0.000px;">Start</div>
<div class="t" id="t3" style="left:129.20px;top:34.20px;font-size:11.5px;color:#1e1e1e;letter-spacing:0.205px;">Bewerken</div>
<div class="t" id="t4" style="left:211.20px;top:34.20px;font-size:11.5px;color:#1e1e1e;letter-spacing:-0.020px;">Zoeken</div>
<div class="t" id="t5" style="left:276.60px;top:34.20px;font-size:11.5px;color:#1e1e1e;letter-spacing:0.430px;">Maken</div>
<div class="t" id="t6" style="left:340.40px;top:34.20px;font-size:11.5px;color:#1e1e1e;letter-spacing:0.180px;">Beeld</div>
<div class="t" id="t7" style="left:58.90px;top:94.00px;font-size:11.5px;color:#303030;letter-spacing:-0.115px;">Omgekeerd</div>
<div class="t" id="t8" style="left:65.80px;top:107.00px;font-size:11.5px;color:#303030;letter-spacing:0.103px;">sorteren</div>
<div class="t" id="t9" style="left:133.50px;top:94.00px;font-size:11.5px;color:#303030;letter-spacing:0.264px;">Beoordeling</div>
<div class="t" id="t10" style="left:202.50px;top:94.00px;font-size:11.5px;color:#303030;letter-spacing:0.222px;">Bijschrift</div>
<div class="t" id="t11" style="left:304.70px;top:94.00px;font-size:11.5px;color:#303030;letter-spacing:0.264px;">Markeringen</div>
<div class="t" id="t12" style="left:386.40px;top:94.00px;font-size:11.5px;color:#303030;letter-spacing:0.091px;">Inzoomen</div>
<div class="t" id="t13" style="left:442.90px;top:94.00px;font-size:11.5px;color:#303030;letter-spacing:0.228px;">Uitzoomen</div>
<div class="t" id="t14" style="left:514.50px;top:94.00px;font-size:11.5px;color:#303030;letter-spacing:0.189px;">Diavoorstelling</div>
<div class="t" id="t15" style="left:614.40px;top:94.00px;font-size:11.5px;color:#303030;letter-spacing:-0.092px;">Tag en</div>
<div class="t" id="t16" style="left:608.50px;top:107.00px;font-size:11.5px;color:#303030;letter-spacing:0.345px;">bijschrift</div>
<div class="t" id="t17" style="left:33.70px;top:127.00px;font-size:11.5px;color:#8a9096;letter-spacing:0.106px;">Lijst ordenen</div>
<div class="t" id="t18" style="left:205.90px;top:127.00px;font-size:11.5px;color:#8a9096;letter-spacing:-0.029px;">Details weergeven</div>
<div class="t" id="t19" style="left:422.00px;top:127.00px;font-size:11.5px;color:#8a9096;letter-spacing:-0.020px;">Zoomen</div>
<div class="t" id="t20" style="left:69.50px;top:147.80px;font-size:11.5px;color:#262626;letter-spacing:0.092px;">Openbare video's</div>
<div class="t" id="t21" style="left:49.40px;top:189.80px;font-size:11.5px;color:#262626;letter-spacing:0.193px;">Apparaten</div>
<div class="t" id="t22" style="left:58.70px;top:210.80px;font-size:11.5px;color:#262626;letter-spacing:-0.426px;">EPSON3AFDAC</div>
<div class="t" id="t23" style="left:48.40px;top:252.80px;font-size:11.5px;color:#262626;letter-spacing:0.048px;">Beschrijvende tags</div>
<div class="t" id="t24" style="left:58.70px;top:273.80px;font-size:11.5px;color:#262626;letter-spacing:0.192px;width:105px;overflow:hidden;">Nieuwe tag toevoegen</div>
<div class="t" id="t25" style="left:59.70px;top:294.80px;font-size:11.5px;color:#262626;letter-spacing:0.202px;">Zonder tag</div>
<div class="t" id="t26" style="left:58.70px;top:315.80px;font-size:11.5px;color:#262626;letter-spacing:0.260px;">Helsinki</div>
<div class="t" id="t27" style="left:58.70px;top:336.80px;font-size:11.5px;color:#262626;letter-spacing:0.222px;">Kopenhagen</div>
<div class="t" id="t28" style="left:58.70px;top:357.80px;font-size:11.5px;color:#262626;letter-spacing:0.476px;">Nyhavn</div>
<div class="t" id="t29" style="left:58.70px;top:378.80px;font-size:11.5px;color:#262626;letter-spacing:-0.088px;">Parijs</div>
<div class="t" id="t30" style="left:58.70px;top:399.80px;font-size:11.5px;color:#262626;letter-spacing:0.410px;">Stockholm</div>
<div class="t" id="t31" style="left:59.70px;top:420.80px;font-size:11.5px;color:#262626;letter-spacing:0.214px;">Tivoli pretpark</div>
<div class="t" id="t32" style="left:59.70px;top:441.80px;font-size:11.5px;color:#262626;letter-spacing:0.222px;">Zeemeermin</div>
<div class="t" id="t33" style="left:217.50px;top:163.00px;font-size:25px;color:#6a6a6a;letter-spacing:1.800px;">j</div>
<div class="t" id="t34" style="left:231.60px;top:168.30px;font-size:11.5px;color:#6d6d6d;letter-spacing:0.061px;">(5 items, 1 geselecteerd)</div>
<div class="t" id="t35" style="left:223.20px;top:300.70px;font-size:11.5px;color:#1e1e1e;letter-spacing:-0.273px;">DSC00090.JPG</div>
<div class="t" id="t36" style="left:223.20px;top:431.30px;font-size:11.5px;color:#1e1e1e;letter-spacing:-0.273px;">DSC00093.JPG</div>
<div class="t" id="t37" style="left:402.40px;top:195.50px;font-size:15px;color:#4b6488;letter-spacing:0.293px;">Informatie</div>
<div class="t" id="t38" style="left:401.80px;top:222.20px;font-size:11.5px;color:#5a5a5a;letter-spacing:0.068px;">Bestandsnaam:</div>
<div class="t" id="t39" style="left:510.60px;top:222.20px;font-size:11.5px;color:#111;letter-spacing:-0.702px;">DSC00090.JPG</div>
<div class="t" id="t40" style="left:401.80px;top:241.13px;font-size:11.5px;color:#5a5a5a;letter-spacing:0.246px;">Genomen op:</div>
<div class="t" id="t41" style="left:510.60px;top:241.13px;font-size:11.5px;color:#111;letter-spacing:-0.072px;">2/07/2012  11:03</div>
<div class="t" id="t42" style="left:401.80px;top:260.06px;font-size:11.5px;color:#5a5a5a;letter-spacing:0.337px;">Grootte:</div>
<div class="t" id="t43" style="left:510.60px;top:260.06px;font-size:11.5px;color:#5a5a5a;letter-spacing:-0.030px;">5,70 MB</div>
<div class="t" id="t44" style="left:401.80px;top:278.99px;font-size:11.5px;color:#5a5a5a;letter-spacing:0.231px;">Beoordeling:</div>
<div class="t" id="t45" style="left:401.80px;top:297.92px;font-size:11.5px;color:#5a5a5a;letter-spacing:0.182px;">Markeren:</div>
<div class="t" id="t46" style="left:402.80px;top:316.85px;font-size:11.5px;color:#5a5a5a;letter-spacing:0.336px;">Afmetingen:</div>
<div class="t" id="t47" style="left:511.60px;top:316.85px;font-size:11.5px;color:#5a5a5a;letter-spacing:-0.392px;">4896 x 3672</div>
<div class="t" id="t48" style="left:401.80px;top:335.78px;font-size:11.5px;color:#5a5a5a;letter-spacing:0.099px;">Gepubliceerd:</div>
<div class="t" id="t49" style="left:510.60px;top:335.78px;font-size:11.5px;color:#5a5a5a;letter-spacing:0.450px;">Nee</div>
<div class="t" id="t50" style="left:401.80px;top:354.71px;font-size:11.5px;color:#5a5a5a;letter-spacing:0.060px;">Camera:</div>
<div class="t" id="t51" style="left:510.60px;top:354.71px;font-size:11.5px;color:#5a5a5a;letter-spacing:-0.308px;">DSC-HX20V</div>
<div class="t" id="t52" style="left:402.80px;top:373.64px;font-size:11.5px;color:#5a5a5a;letter-spacing:0.290px;">Auteur:</div>
<div class="t" id="t53" style="left:510.60px;top:373.64px;font-size:11.5px;color:#111;letter-spacing:0.232px;">Fotograaf toevoegen</div>
<div class="t" id="t54" style="left:401.80px;top:392.57px;font-size:11.5px;color:#5a5a5a;letter-spacing:0.436px;">Belichting:</div>
<div class="t" id="t55" style="left:510.60px;top:392.57px;font-size:11.5px;color:#5a5a5a;letter-spacing:0.009px;">1/1600 sec</div>
<div class="t" id="t56" style="left:401.80px;top:411.50px;font-size:11.5px;color:#5a5a5a;letter-spacing:0.273px;">Diafragma:</div>
<div class="t" id="t57" style="left:511.60px;top:411.50px;font-size:11.5px;color:#5a5a5a;letter-spacing:0.365px;">f/3.5</div>
<div class="t" id="t58" style="left:401.80px;top:430.43px;font-size:11.5px;color:#5a5a5a;letter-spacing:0.166px;">Brandpuntsafstand:</div>
<div class="t" id="t59" style="left:510.60px;top:430.43px;font-size:11.5px;color:#5a5a5a;letter-spacing:0.472px;">6.5 mm</div>
<div class="t" id="t60" style="left:22.60px;top:476.00px;font-size:11.5px;color:#64809e;letter-spacing:0.029px;">5 items, 1 geselecteerd</div>
</body></html>
